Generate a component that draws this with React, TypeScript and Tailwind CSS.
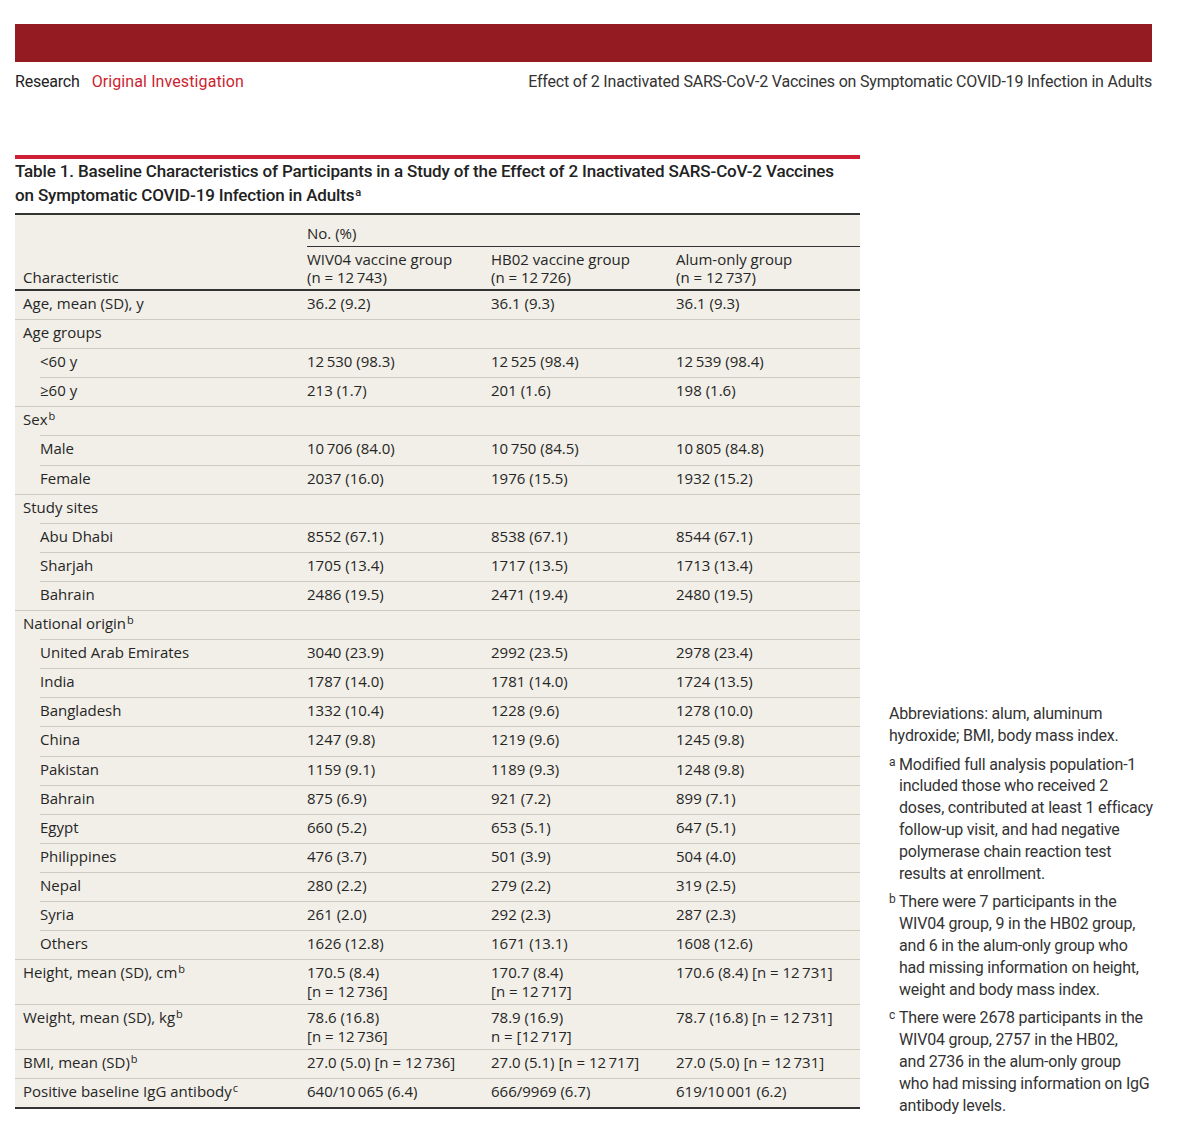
import React from 'react';

type Row = {
  label: string;
  sup?: string;
  indent?: boolean;
  v?: (string | string[])[];
};

const t = (s: string) => s.replace(/(\d) (\d)/g, '$1\u2009$2');

const rows: Row[] = [
  { label: 'Age, mean (SD), y', v: ['36.2 (9.2)', '36.1 (9.3)', '36.1 (9.3)'] },
  { label: 'Age groups' },
  { label: '<60 y', indent: true, v: ['12 530 (98.3)', '12 525 (98.4)', '12 539 (98.4)'] },
  { label: '≥60 y', indent: true, v: ['213 (1.7)', '201 (1.6)', '198 (1.6)'] },
  { label: 'Sex', sup: 'b' },
  { label: 'Male', indent: true, v: ['10 706 (84.0)', '10 750 (84.5)', '10 805 (84.8)'] },
  { label: 'Female', indent: true, v: ['2037 (16.0)', '1976 (15.5)', '1932 (15.2)'] },
  { label: 'Study sites' },
  { label: 'Abu Dhabi', indent: true, v: ['8552 (67.1)', '8538 (67.1)', '8544 (67.1)'] },
  { label: 'Sharjah', indent: true, v: ['1705 (13.4)', '1717 (13.5)', '1713 (13.4)'] },
  { label: 'Bahrain', indent: true, v: ['2486 (19.5)', '2471 (19.4)', '2480 (19.5)'] },
  { label: 'National origin', sup: 'b' },
  { label: 'United Arab Emirates', indent: true, v: ['3040 (23.9)', '2992 (23.5)', '2978 (23.4)'] },
  { label: 'India', indent: true, v: ['1787 (14.0)', '1781 (14.0)', '1724 (13.5)'] },
  { label: 'Bangladesh', indent: true, v: ['1332 (10.4)', '1228 (9.6)', '1278 (10.0)'] },
  { label: 'China', indent: true, v: ['1247 (9.8)', '1219 (9.6)', '1245 (9.8)'] },
  { label: 'Pakistan', indent: true, v: ['1159 (9.1)', '1189 (9.3)', '1248 (9.8)'] },
  { label: 'Bahrain', indent: true, v: ['875 (6.9)', '921 (7.2)', '899 (7.1)'] },
  { label: 'Egypt', indent: true, v: ['660 (5.2)', '653 (5.1)', '647 (5.1)'] },
  { label: 'Philippines', indent: true, v: ['476 (3.7)', '501 (3.9)', '504 (4.0)'] },
  { label: 'Nepal', indent: true, v: ['280 (2.2)', '279 (2.2)', '319 (2.5)'] },
  { label: 'Syria', indent: true, v: ['261 (2.0)', '292 (2.3)', '287 (2.3)'] },
  { label: 'Others', indent: true, v: ['1626 (12.8)', '1671 (13.1)', '1608 (12.6)'] },
  {
    label: 'Height, mean (SD), cm',
    sup: 'b',
    v: [['170.5 (8.4)', '[n = 12 736]'], ['170.7 (8.4)', '[n = 12 717]'], '170.6 (8.4) [n = 12 731]'],
  },
  {
    label: 'Weight, mean (SD), kg',
    sup: 'b',
    v: [['78.6 (16.8)', '[n = 12 736]'], ['78.9 (16.9)', 'n = [12 717]'], '78.7 (16.8) [n = 12 731]'],
  },
  {
    label: 'BMI, mean (SD)',
    sup: 'b',
    v: ['27.0 (5.0) [n = 12 736]', '27.0 (5.1) [n = 12 717]', '27.0 (5.0) [n = 12 731]'],
  },
  {
    label: 'Positive baseline IgG antibody',
    sup: 'c',
    v: ['640/10 065 (6.4)', '666/9969 (6.7)', '619/10 001 (6.2)'],
  },
];

const Sup: React.FC<{ c: string }> = ({ c }) => <sup className="text-[11px] ml-[1px]">{c}</sup>;

const Cell: React.FC<{ v?: string | string[] }> = ({ v }) => {
  if (!v) return <div />;
  if (Array.isArray(v)) {
    return (
      <div className="whitespace-nowrap">
        {v.map((s, i) => (
          <div key={i}>{t(s)}</div>
        ))}
      </div>
    );
  }
  return <div className="whitespace-nowrap">{t(v)}</div>;
};

const TableRow: React.FC<{ row: Row; first: boolean }> = ({ row, first }) => {
  const twoLine = row.v?.some((x) => Array.isArray(x));
  return (
    <div className={row.indent ? 'ml-[25px]' : ''}>
      <div
        className={`grid ${twoLine ? 'pt-[3px] pb-[3px] leading-[19px]' : 'pt-[3px] pb-[7.1px] leading-[18px]'} ${
          first ? '' : 'border-t border-[#cdcac2]'
        } ${row.indent ? 'grid-cols-[267px_184px_185px_1fr]' : 'grid-cols-[284px_184px_185px_1fr] pl-2'}`}
      >
        <div>
          {row.label}
          {row.sup && <Sup c={row.sup} />}
        </div>
        <Cell v={row.v?.[0]} />
        <Cell v={row.v?.[1]} />
        <Cell v={row.v?.[2]} />
      </div>
    </div>
  );
};

const Note: React.FC<{ mark: string; children: React.ReactNode }> = ({ mark, children }) => (
  <div className="flex mt-[7px]">
    <span className="w-[10px] shrink-0 text-[12px] leading-[16px]">{mark}</span>
    <p className="whitespace-nowrap">{children}</p>
  </div>
);

export default function App() {
  return (
    <div
      className="w-[1200px] h-[1135px] bg-white text-[#222] pt-6 px-[15px]"
      style={{ fontFamily: 'Roboto, "Open Sans", sans-serif' }}
    >
      {/* Banner */}
      <div className="h-[38px] w-[1137px] bg-[#941b21]" />
      <div className="flex justify-between w-[1137px] mt-[10px] text-[16px] leading-5">
        <div className="flex gap-3">
          <span className="text-[#222] tracking-[-0.2px]">Research</span>
          <span className="text-[#cc1f31] tracking-[0.1px]">Original Investigation</span>
        </div>
        <span className="text-[#333] tracking-[-0.2px]">
          Effect of 2 Inactivated SARS-CoV-2 Vaccines on Symptomatic COVID-19 Infection in Adults
        </span>
      </div>

      <div className="flex gap-[29px] mt-[63px]">
        {/* Table */}
        <div className="w-[845px] shrink-0">
          <div className="h-1 bg-[#cf1f36]" />
          <h1 className="text-[17px] leading-6 font-medium pb-[6px] text-[#222] tracking-[-0.15px]">
            Table 1. Baseline Characteristics of Participants in a Study of the Effect of 2 Inactivated SARS-CoV-2 Vaccines
            <br />
            on Symptomatic COVID-19 Infection in Adults
            <sup className="text-[11px] ml-[1px]">a</sup>
          </h1>
          <div
            className="bg-[#f1efe8] border-t-2 border-b-2 border-[#333] text-[15px] text-[#262626]"
            style={{ fontFamily: '"Open Sans", Roboto, sans-serif' }}
          >
            {/* Header */}
            <div className="grid grid-cols-[284px_1fr] pl-2 border-b-2 border-[#333]">
              <div className="flex items-end pb-[3px] leading-[18px]">Characteristic</div>
              <div>
                <div className="pt-[9px] pb-[4px] leading-[18px] border-b border-[#333]">No. (%)</div>
                <div className="grid grid-cols-[184px_185px_1fr] pt-[3px] pb-[3px] leading-[18px]">
                  <div>
                    WIV04 vaccine group
                    <br />
                    (n = {'12\u2009743'})
                  </div>
                  <div>
                    HB02 vaccine group
                    <br />
                    (n = {'12\u2009726'})
                  </div>
                  <div>
                    Alum-only group
                    <br />
                    (n = {'12\u2009737'})
                  </div>
                </div>
              </div>
            </div>
            {rows.map((r, i) => (
              <TableRow key={i} row={r} first={i === 0} />
            ))}
          </div>
        </div>

        {/* Footnotes */}
        <div className="w-[270px] self-end -mb-[7px] text-[16px] leading-[21.8px] text-[#333] tracking-[-0.2px]">
          <p>
            Abbreviations: alum, aluminum
            <br />
            hydroxide; BMI, body mass index.
          </p>
          <Note mark="a">
            Modified full analysis population-1
            <br />
            included those who received 2
            <br />
            doses, contributed at least 1 efficacy
            <br />
            follow-up visit, and had negative
            <br />
            polymerase chain reaction test
            <br />
            results at enrollment.
          </Note>
          <Note mark="b">
            There were 7 participants in the
            <br />
            WIV04 group, 9 in the HB02 group,
            <br />
            and 6 in the alum-only group who
            <br />
            had missing information on height,
            <br />
            weight and body mass index.
          </Note>
          <Note mark="c">
            There were 2678 participants in the
            <br />
            WIV04 group, 2757 in the HB02,
            <br />
            and 2736 in the alum-only group
            <br />
            who had missing information on IgG
            <br />
            antibody levels.
          </Note>
        </div>
      </div>
    </div>
  );
}
